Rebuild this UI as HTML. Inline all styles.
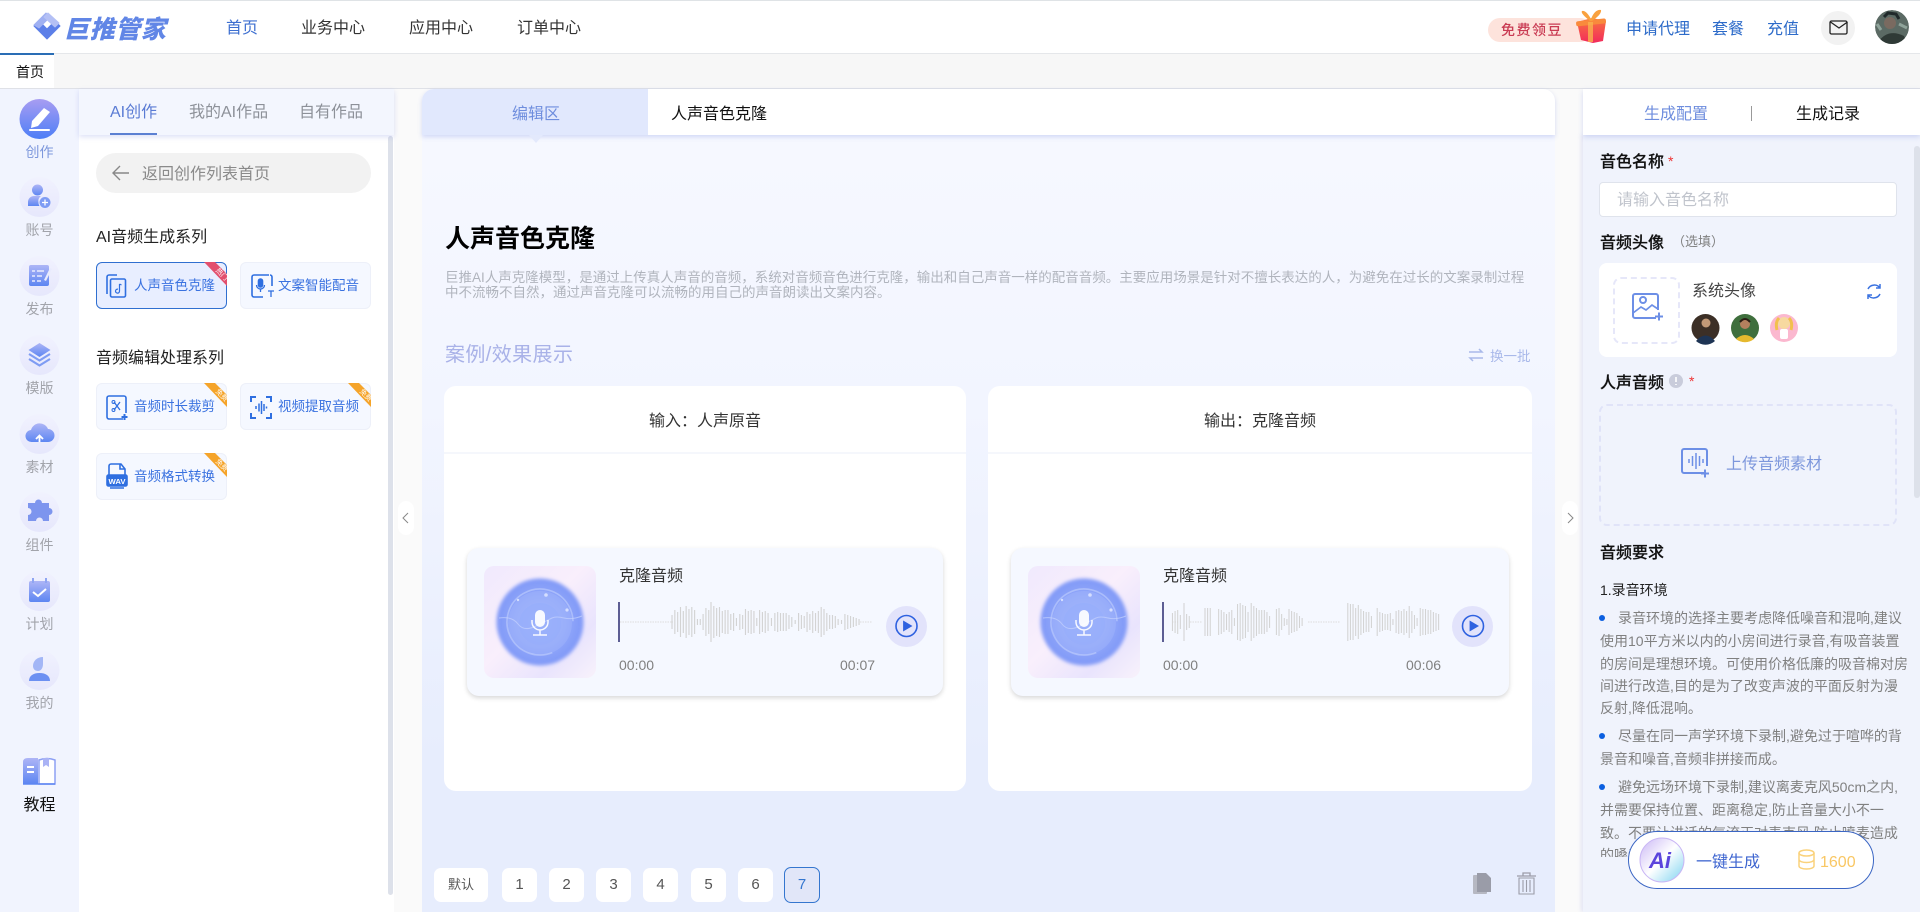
<!DOCTYPE html>
<html lang="zh"><head><meta charset="utf-8"><title>巨推管家</title>
<style>
*{box-sizing:border-box;margin:0;padding:0}
html,body{width:1920px;height:912px;overflow:hidden;background:#fafafa;font-family:"Liberation Sans","Noto Sans CJK SC",sans-serif}
.a{position:absolute}
.t{position:absolute;white-space:nowrap;line-height:20px;height:20px;font-size:16px;color:#333;margin-top:2px}
.m0{margin-top:0}
.c{transform:translateX(-50%)}
.card{position:absolute;width:131px;height:47px;background:#f5f8ff;border:1px solid #edf0f9;border-radius:6px}
.ct{position:absolute;left:37px;top:13px;font-size:13.5px;line-height:20px;color:#3a72e0;white-space:nowrap}
.pg{position:absolute;top:868px;height:34px;width:35px;background:#fff;border-radius:7px;text-align:center;line-height:33px;font-size:15px;color:#555}
.lbl{position:absolute;left:1600px;font-size:16px;line-height:20px;height:20px;font-weight:500;color:#111;white-space:nowrap;-webkit-text-stroke:.2px #111}
.req{position:absolute;left:1600px;width:298px;font-size:14px;line-height:20px;color:#808080;white-space:nowrap}
.dot{position:absolute;left:1599px;width:6px;height:6px;border-radius:50%;background:#0b5fe0}
.side{position:absolute;left:0;width:79px;text-align:center;font-size:14px;line-height:20px;color:#a2a4ab}
</style></head><body>

<!-- backgrounds -->
<div class="a" style="left:0;top:0;width:1920px;height:54px;background:#fff;border-top:1px solid #dfe3e6;border-bottom:1px solid #e5e7ea"></div>
<div class="a" style="left:0;top:54px;width:1920px;height:35px;background:#f7f7f7;border-bottom:1px solid #dfe1e7"></div>
<div class="a" style="left:0;top:55px;width:54px;height:33px;background:#fff"></div>
<div class="a" style="left:0;top:53px;width:54px;height:2px;background:#2a6db5"></div>

<div class="a" style="left:0;top:89px;width:79px;height:823px;background:#f1f4fe"></div>
<div class="a" style="left:79px;top:135px;width:315px;height:777px;background:#fff"></div>
<div class="a" style="left:388px;top:136px;width:5px;height:759px;background:#dde1ea;border-radius:3px"></div>
<div class="a" style="left:79px;top:89px;width:315px;height:46px;background:#f3f6fe;box-shadow:0 2px 5px rgba(100,120,220,.22)"></div>
<div class="a" style="left:110px;top:133px;width:47px;height:2px;background:#5b80d2"></div>

<div class="a" style="left:422px;top:135px;width:1133px;height:777px;background:linear-gradient(#f6f8ff,#f2f5ff 35%,#e7edfd 80%)"></div>
<div class="a" style="left:422px;top:89px;width:1133px;height:46px;background:#fff;border-radius:12px 12px 0 0;box-shadow:0 2px 5px rgba(100,120,220,.25)"></div>
<div class="a" style="left:422px;top:89px;width:226px;height:46px;background:#e1e8fd;border-radius:12px 0 0 0"></div>
<div class="a" style="left:529px;top:135px;width:0;height:0;border-left:7px solid transparent;border-right:7px solid transparent;border-top:8px solid #e3e9fc"></div>

<div class="a" style="left:444px;top:386px;width:522px;height:405px;background:#fff;border-radius:12px"></div>
<div class="a" style="left:988px;top:386px;width:544px;height:405px;background:#fff;border-radius:12px"></div>
<div class="a" style="left:444px;top:452px;width:522px;height:2px;background:#f5f7fc"></div>
<div class="a" style="left:988px;top:452px;width:544px;height:2px;background:#f5f7fc"></div>
<div class="a" style="left:467px;top:548px;width:476px;height:148px;background:#f5f8ff;border-radius:12px;box-shadow:0 2px 5px rgba(0,0,0,.16)"></div>
<div class="a" style="left:1011px;top:548px;width:498px;height:148px;background:#f5f8ff;border-radius:12px;box-shadow:0 2px 5px rgba(0,0,0,.16)"></div>
<div class="a" style="left:484px;top:566px;width:112px;height:112px;border-radius:10px;background:linear-gradient(135deg,#f0e9fd,#f9effc 45%,#e9e4fd 75%,#f8f2fb)"></div>
<div class="a" style="left:1028px;top:566px;width:112px;height:112px;border-radius:10px;background:linear-gradient(135deg,#f0e9fd,#f9effc 45%,#e9e4fd 75%,#f8f2fb)"></div>
<div class="a" style="left:886px;top:606px;width:41px;height:41px;border-radius:50%;background:#e2e3fb"></div>
<div class="a" style="left:1452px;top:606px;width:41px;height:41px;border-radius:50%;background:#e2e3fb"></div>

<div class="a" style="left:398px;top:501px;width:16px;height:34px;background:#fff;border-radius:8px"></div>
<div class="a" style="left:1562px;top:501px;width:16px;height:34px;background:#fff;border-radius:8px"></div>

<div class="a" style="left:1583px;top:135px;width:337px;height:777px;background:#f0f3fc;box-shadow:-2px 0 4px rgba(110,120,220,.16)"></div>
<div class="a" style="left:1583px;top:89px;width:337px;height:46px;background:#fff;box-shadow:0 2px 5px rgba(100,120,220,.25)"></div>
<div class="a" style="left:1914px;top:146px;width:6px;height:352px;background:#dde1ea;border-radius:3px"></div>
<div class="a" style="left:1751px;top:106px;width:1px;height:15px;background:#999"></div>

<div class="a" style="left:1599px;top:182px;width:298px;height:35px;background:#fff;border:1px solid #dfe3ec;border-radius:4px"></div>
<div class="a" style="left:1599px;top:263px;width:298px;height:94px;background:#fff;border-radius:8px"></div>
<div class="a" style="left:1613px;top:277px;width:67px;height:67px;border:2px dashed #e6e7f9;border-radius:8px"></div>
<div class="a" style="left:1599px;top:404px;width:298px;height:122px;border:2px dashed #e0e3f8;border-radius:8px"></div>

<div class="a" style="left:96px;top:153px;width:275px;height:40px;background:#f2f2f2;border-radius:20px"></div>
<div class="a" style="left:1488px;top:18px;width:104px;height:24px;background:#fde3dc;border-radius:12px"></div>
<div class="a" style="left:1821px;top:11px;width:34px;height:34px;background:#f2f2f2;border-radius:50%"></div>

<!-- cards -->
<div class="card" style="left:96px;top:262px;background:#e8eeff;border:1px solid #2f6fd0"><div class="ct">人声音色克隆</div></div>
<div class="card" style="left:240px;top:262px"><div class="ct">文案智能配音</div></div>
<div class="card" style="left:96px;top:383px"><div class="ct">音频时长裁剪</div></div>
<div class="card" style="left:240px;top:383px"><div class="ct">视频提取音频</div></div>
<div class="card" style="left:96px;top:453px"><div class="ct">音频格式转换</div></div>

<!-- all graphics -->
<svg class="a" style="left:0;top:0" width="1920" height="912" viewBox="0 0 1920 912" fill="none">
<defs>
<linearGradient id="g" x1="0" y1="0" x2="0" y2="1"><stop offset="0" stop-color="#aeb5f6"/><stop offset="1" stop-color="#5d86f2"/></linearGradient>
<linearGradient id="cb" x1="0" y1="0" x2="0" y2="1"><stop offset="0" stop-color="#f1f2fe"/><stop offset="1" stop-color="#e6e7fc"/></linearGradient>
<linearGradient id="act" x1="0" y1="0" x2="0" y2="1"><stop offset="0" stop-color="#a89df2"/><stop offset="1" stop-color="#4d7ef6"/></linearGradient>
<radialGradient id="disc"><stop offset="0" stop-color="#a4b7fb"/><stop offset=".6" stop-color="#93a9fa"/><stop offset="1" stop-color="#7f98f7"/></radialGradient>
<linearGradient id="ai" x1="0" y1="0" x2="1" y2="1"><stop offset="0" stop-color="#c9b6f5"/><stop offset=".5" stop-color="#fff"/><stop offset="1" stop-color="#7dd3f0"/></linearGradient>
<linearGradient id="gift" x1="0" y1="0" x2="0" y2="1"><stop offset="0" stop-color="#f9763e"/><stop offset="1" stop-color="#f22a5c"/></linearGradient>
<filter id="bl" x="-20%" y="-20%" width="140%" height="140%"><feGaussianBlur stdDeviation="1.800"/></filter>
<clipPath id="avc"><circle cx="1892" cy="27" r="17"/></clipPath>
<g id="disk">
<circle r="43.5" fill="url(#disc)" filter="url(#bl)"/>
<circle cy="1" r="32" fill="#a2b5fb" opacity=".45"/>
<circle cy="2" r="21" fill="#96adfb" opacity=".6"/>
<circle r="33" fill="none" stroke="#c7d3fd" stroke-width="1.600" opacity=".55" stroke-dasharray="120 40" transform="rotate(150)"/>
<path d="M-41 -4Q-28 -6 -22 2T-4 4T12 -4T24 -4T42 -6" stroke="#c4d1fd" stroke-width="1" fill="none" opacity=".7"/>
<circle cx="6" cy="-27" r="1.800" fill="#d5defe"/><circle cx="27" cy="-12" r="1.600" fill="#d5defe"/><circle cx="-22" cy="-22" r="1.200" fill="#d5defe"/>
<rect x="-5" y="-12" width="10" height="17" rx="5" fill="#fff" opacity=".92"/>
<path d="M-8 -2v2a8 8 0 0 0 16 0v-2M0 8v5M-7 13h14" stroke="#fff" stroke-width="1.500" opacity=".92"/>
</g>
<g id="play"><circle r="10.500" stroke="#2f62e0" stroke-width="1.600" fill="none"/><path d="M-3.400 -5.500L6 0L-3.400 5.500Z" fill="#2f62e0"/></g>
</defs>

<!-- logo -->
<g transform="translate(2,0)">
<path d="M32 26l13 13 13-13-5-5-8 8-8-8z" fill="#5c7fe8" stroke="#5c7fe8" stroke-width="1" stroke-linejoin="round"/>
<path d="M32 25l12-12 4 4-11 11z" fill="#9fb0f2" stroke="#9fb0f2" stroke-width="1" stroke-linejoin="round"/>
<path d="M46 13l11 10-4 4-11-10z" fill="#b4c0f5" stroke="#b4c0f5" stroke-width="1" stroke-linejoin="round"/>
</g>

<!-- sidebar circles -->
<circle cx="39.500" cy="119" r="20" fill="url(#act)"/>
<circle cx="39.500" cy="197" r="20" fill="url(#cb)"/>
<circle cx="39.500" cy="276" r="20" fill="url(#cb)"/>
<circle cx="39.500" cy="355" r="20" fill="url(#cb)"/>
<circle cx="39.500" cy="434" r="20" fill="url(#cb)"/>
<circle cx="39.500" cy="512" r="20" fill="url(#cb)"/>
<circle cx="39.500" cy="591" r="20" fill="url(#cb)"/>
<circle cx="39.500" cy="670" r="20" fill="url(#cb)"/>

<!-- sidebar glyphs -->
<path d="M44 108l6 4-12 14-7 2 1-7z" fill="#fff"/><path d="M30 130h19" stroke="#fff" stroke-width="2" stroke-linecap="round"/>
<circle cx="37.500" cy="190" r="5.500" fill="url(#g)"/><path d="M28 206v-4a6 6 0 0 1 6-6h7a6 6 0 0 0 0 10z" fill="url(#g)"/><circle cx="45" cy="202.500" r="6" fill="#7e9cf4" stroke="#e9ebfd" stroke-width="1"/><path d="M45 199.500v6M42 202.500h6" stroke="#fff" stroke-width="1.300"/>
<rect x="29" y="265" width="20" height="21" rx="2" fill="url(#g)"/><path d="M32 271h3M37 271h7M32 276h3M37 276h5M32 281h3M37 281h4" stroke="#e9ebfd" stroke-width="1.500"/><path d="M44 280l6-12 2 1-6 12z" fill="#e9ebfd"/>
<path d="M39.500 343l11 7-11 7-11-7z" fill="url(#g)"/><path d="M29 354l10.500 6.500L50 354M29 359l10.500 6.500L50 359" stroke="#7f9cf3" stroke-width="2.200" fill="none"/>
<path d="M32 442a6 6 0 0 1-1-12 9 9 0 0 1 17-1 6.500 6.500 0 0 1 0 13z" fill="url(#g)"/><path d="M39.500 442v-6M36 439l3.500-3.500 3.500 3.500" stroke="#fff" stroke-width="1.800"/>
<path d="M29 505h7a3.500 3.500 0 1 1 7 0h7v5a3.500 3.500 0 1 1 0 7v6h-6a3.500 3.500 0 1 0-7 0h-8v-6a3.500 3.500 0 1 0 0-7z" fill="#7d95ee" transform="translate(-1,-2)"/>
<rect x="29" y="581" width="21" height="21" rx="2" fill="url(#g)"/><path d="M33 578v5M46 578v5" stroke="#8fa5f2" stroke-width="2"/><path d="M33 592l5 4 8-7" stroke="#fff" stroke-width="2" fill="none"/>
<path d="M33 666c0-5 4-9 10-9l0 7c0 4-2 7-5 7s-5-2-5-5z" fill="#a3b6f6"/><path d="M29 681c0-5 4-8 10.500-8s10.500 3 10.500 8z" fill="#6c90f2"/>
<path d="M23 762q0-4 5-4h10v26H23z" fill="url(#g)"/><path d="M39 760q8-3 16 0v24H39z" fill="#fff" stroke="#8da0f4" stroke-width="1.500"/><path d="M43 758v9l3-2 3 2v-9" fill="#aab3f5"/><path d="M27 767h7M27 772h7" stroke="#fff" stroke-width="2"/><path d="M23 784h32" stroke="#5d86f2" stroke-width="1.500"/>

<!-- back arrow -->
<path d="M129 173H114M120 166l-7 7 7 7" stroke="#888" stroke-width="1.400" fill="none"/>

<!-- card icons -->
<g stroke="#2f6fe0" stroke-width="1.600" fill="none">
<path d="M117 275h-8a2 2 0 0 0-2 2v17"/><rect x="110.500" y="279" width="15" height="18" rx="1.500"/><path d="M119.500 284v7a2 2 0 1 1-1.500-1.800M119.500 284l2 1" stroke-width="1.200"/>
<path d="M269 275h-15a2 2 0 0 0-2 2v18a2 2 0 0 0 2 2h9M272 286V277a2 2 0 0 0-2-2"/><rect x="258.500" y="279" width="4" height="8" rx="2" fill="#2f6fe0"/><path d="M256.500 285a4 4 0 0 0 8 0M260.500 289v3M268 291h6M271 291v6" stroke-width="1.300"/>
<g transform="translate(0,22)"><path d="M123 397h-14a2 2 0 0 1-2-2v-19a2 2 0 0 1 2-2h15a2 2 0 0 1 2 2v15"/><path d="M114 380l6 8M120 380l-6 8" stroke-width="1.300"/><circle cx="113.500" cy="380" r="1.500" stroke-width="1"/><circle cx="113.500" cy="388" r="1.500" stroke-width="1"/><path d="M124.500 392v6M121.500 395h6" stroke-width="2"/></g>
<g transform="translate(0,21)"><path d="M251 381v-5h5M266 376h5v5M251 392v5h5M266 397h5v-5" stroke-width="2"/><path d="M256 385v3M259 382.500v8M261.500 380v13M264 383v7M266.500 385.500v2" stroke-width="1.500"/></g>
<path d="M109 475v-9a2 2 0 0 1 2-2h10l4 5v6M125 469h-5v-5"/>
<rect x="107" y="475" width="20" height="11" rx="1.500" fill="#2f6fe0"/><path d="M110 488h14" stroke-width="1.500"/>
</g>
<text x="108.500" y="484" font-size="7.500" font-weight="700" fill="#fff" font-family="Liberation Sans" textLength="17" lengthAdjust="spacingAndGlyphs">WAV</text>

<!-- ribbons -->
<g>
<polygon points="204,262 215,262 227,274 227,286" fill="#e2506e"/>
<text x="214" y="272" font-size="7" fill="#fff" transform="rotate(45 216 273)" font-family="Liberation Sans,Noto Sans CJK SC">热门</text>
<polygon points="204,383 215,383 227,395 227,407" fill="#f5a42a"/>
<text x="214" y="393" font-size="7" fill="#fff" transform="rotate(45 216 394)" font-family="Liberation Sans,Noto Sans CJK SC">免费</text>
<polygon points="348,383 359,383 371,395 371,407" fill="#f5a42a"/>
<text x="358" y="393" font-size="7" fill="#fff" transform="rotate(45 360 394)" font-family="Liberation Sans,Noto Sans CJK SC">免费</text>
<polygon points="204,453 215,453 227,465 227,477" fill="#f5a42a"/>
<text x="214" y="463" font-size="7" fill="#fff" transform="rotate(45 216 464)" font-family="Liberation Sans,Noto Sans CJK SC">免费</text>
</g>

<!-- collapse chevrons -->
<path d="M408 513l-5 5 5 5" stroke="#888" stroke-width="1" fill="none"/>
<path d="M1568 513l5 5-5 5" stroke="#888" stroke-width="1" fill="none"/>

<!-- swap icon -->
<path d="M1469 352h13l-3-3M1483 358h-13l3 3" stroke="#a9b9ea" stroke-width="1.500" fill="none"/>

<!-- disks -->
<use href="#disk" x="540" y="622"/>
<use href="#disk" x="1084" y="622"/>

<!-- waves -->
<path d="M619 602v40" stroke="#0b0b5a" stroke-width="1.300"/>
<path d="M1163 602v40" stroke="#0b0b5a" stroke-width="1.300"/>
<path d="M620 622h53M860 622h12M1172 622h6M1190 622h12M1308 622h32" stroke="#ddd" stroke-width="1" stroke-dasharray="1.500 1"/>
<g transform="translate(611,622) scale(1.130,1)" stroke="#d3d3d3" stroke-width="1">
<path d="M54-7v14M56.500-12v24M59-10v20M61.500-15v30M64-11v22M66.500-16v32M69-13v26M71.500-15v30M74-12v24M76.500-3v6M79-3v6M81.500-8v16M84-14v28M86.500-12v24M88.500-20v40M91-16v32M93.500-14v28M96-15v30M98.500-11v22M101-12v24M103.500-12v24M106-8v16M108.500-9v18M111-4v8M114-8v16M116.500-7v14M119-13v26M121.500-11v22M124-12v24M126.500-11v22M129-4v8M131.500-12v24M134-10v20M136.500-11v22M139-9v18M142-4v8M145-9v18M147.500-10v20M150-9v18M152.500-9v18M155-9v18M157.500-7v14M160-5v10M163-2v4M166-9v18M168.500-7v14M171-6v12M173.500-10v20M176-8v16M178.500-11v22M181-9v18M183.500-11v22M186-15v30M188.500-13v26M191-9v18M193.500-7v14M196-7v14M198.500-6v12M201-3v6M204-2v4M207-8v16M209.500-7v14M212-6v12M214.500-5v10M217-4v8M219.500-3v6"/>
</g>
<g transform="translate(1163,622) scale(1.050,1)" stroke="#d3d3d3" stroke-width="1">
<path d="M9-9v18M11.500-11v22M14-12v24M16.500-7v14M20-19v38M22.500-8v16M25-6v12M40-14v28M42.500-14v28M45-14v28M53-13v26M55.500-12v24M58-10v20M60.500-8v16M63-10v20M65.500-12v24M68-4v8M71-18v36M73.500-19v38M76-17v34M78.500-16v32M81-10v20M84-19v38M86.500-16v32M89-14v28M91.500-12v24M94-12v24M96.500-12v24M99-10v20M101.500-6v12M108-13v26M110.500-14v28M113-8v16M115.500-4v8M118-3v6M120-13v26M122.500-11v22M125-10v20M127.500-9v18M130-6v12M132.500-4v8M176-19v38M178.500-18v36M181-18v36M183.500-14v28M186-17v34M188.500-13v26M191-11v22M193.500-10v20M196-10v20M198.500-6v12M204-14v28M206.500-10v20M209-9v18M211.500-8v16M214-8v16M216.500-9v18M219-3v6M222-11v22M224.500-12v24M227-11v22M229.500-13v26M232-11v22M234.500-16v32M237-11v22M239.500-7v14M242-4v8M245-14v28M247.500-13v26M250-13v26M252.500-12v24M255-12v24M257.500-10v20M260-9v18M262.500-8v16"/>
</g>
<use href="#play" x="906.500" y="626"/>
<use href="#play" x="1473" y="626"/>

<!-- copy / trash -->
<rect x="1473" y="875" width="14" height="19" rx="1" fill="#b6b8c2"/>
<path d="M1477 873h9l5 5v14h-14z" fill="#9a9ca8"/>
<path d="M1517 876h19M1523 876v-3h7v3" stroke="#9b9da8" stroke-width="1.300" fill="none"/>
<path d="M1519 878h15v16h-15zM1523 880v12M1526.500 880v12M1530 880v12" stroke="#9b9da8" stroke-width="1.100" fill="none"/>

<!-- right panel icons -->
<g stroke="#6d8fe6" stroke-width="2" fill="none">
<path d="M1656 318h-21a2 2 0 0 1-2-2v-20a2 2 0 0 1 2-2h21a2 2 0 0 1 2 2v14"/>
<circle cx="1643" cy="300" r="3"/><path d="M1633 313l8-6 5 3 6-5 6 4" stroke-width="1.700"/><path d="M1655 316.500h8M1659 312.500v8"/>
<path d="M1705 473h-21a2 2 0 0 1-2-2v-20a2 2 0 0 1 2-2h21a2 2 0 0 1 2 2v15"/>
<path d="M1689 459v4M1692.500 456v10M1696 453v16M1699.500 456v10M1703 459v4" stroke-width="1.500"/><path d="M1701 473.500h8M1705 469.500v8"/>
</g>
<path d="M1868 289a7 7 0 0 1 12-1M1880 294a7 7 0 0 1-12 1M1880 284v4h-4M1868 299v-4h4" stroke="#3a72e0" stroke-width="1.500" fill="none"/>
<circle cx="1676" cy="381" r="7" fill="#c9ccdb"/><path d="M1676 377v5M1676 384v1" stroke="#fff" stroke-width="1.600"/>

<!-- avatars -->
<circle cx="1705.500" cy="328" r="14" fill="#3c2f26"/><path d="M1696 341q9.500-11 19 0a14 14 0 0 1-19 0z" fill="#1e3454"/><circle cx="1706" cy="323" r="4.500" fill="#c39a78"/>
<circle cx="1745" cy="328" r="14" fill="#3f6f3d"/><path d="M1736 339q9-8 18 0a14 14 0 0 1-18 0z" fill="#e6b92e"/><circle cx="1745" cy="324" r="5" fill="#b4805e"/><path d="M1740 322q5-6 10 0" stroke="#2b1d14" stroke-width="2" fill="none"/>
<circle cx="1784" cy="328" r="14" fill="#fbb8cf"/><circle cx="1784" cy="323" r="6" fill="#f7d9a0"/><path d="M1777 330q-2-8 2-12M1791 330q2-8-2-12" stroke="#f2c04d" stroke-width="3" fill="none"/><rect x="1780" y="329" width="8" height="10" rx="2" fill="#fff"/>

<!-- header right icons -->
<path d="M1577 22l15-4 14 3-3 20-10 2-12-3z" fill="url(#gift)"/>
<rect x="1576" y="20" width="30" height="5" rx="2" fill="#f98a3c" transform="rotate(-6 1590 22)"/>
<path d="M1590 21q-10-8-8-10 4-1 9 8 4-10 10-9 1 4-9 11" fill="#f9a13e"/>
<rect x="1588" y="22" width="5" height="20" fill="#f9b14d" opacity=".8"/>
<rect x="1830" y="21" width="17" height="13" rx="1.500" stroke="#222" stroke-width="1.300" fill="none"/>
<path d="M1830.500 22l8.500 6 8.500-6" stroke="#222" stroke-width="1.300" fill="none"/>
<g clip-path="url(#avc)"><circle cx="1892" cy="27" r="17" fill="#5b6a64"/><circle cx="1890" cy="23" r="6" fill="#7a6a60"/><path d="M1878 42q10-14 26-6l4 10h-32z" fill="#2f3a36"/><path d="M1884 17l4-4 8 1 3 5" stroke="#20292a" stroke-width="3" fill="none"/><path d="M1899 24l8 4M1877 24l4 6" stroke="#8fa39a" stroke-width="3"/></g>
</svg>

<!-- header text -->
<div class="t" style="left:64px;top:13px;font-size:25px;line-height:30px;height:30px;font-style:italic;font-weight:900;color:#6186e6;letter-spacing:.6px">巨推管家</div>
<div class="t" style="left:226px;top:17px;color:#3d6fd0">首页</div>
<div class="t" style="left:301px;top:17px">业务中心</div>
<div class="t" style="left:409px;top:17px">应用中心</div>
<div class="t" style="left:517px;top:17px">订单中心</div>
<div class="t" style="left:16px;top:62px;font-size:14px;color:#111;margin-top:0">首页</div>
<div class="t m0" style="left:1501px;top:20px;font-size:14px;color:#c93b53;letter-spacing:1.500px;font-weight:500">免费领豆</div>
<div class="t" style="left:1626px;top:18px;color:#2d6bc9">申请代理</div>
<div class="t" style="left:1712px;top:18px;color:#2d6bc9">套餐</div>
<div class="t" style="left:1767px;top:18px;color:#2d6bc9">充值</div>

<!-- sidebar labels -->
<div class="side" style="top:142px;color:#7d97dc">创作</div>
<div class="side" style="top:220px">账号</div>
<div class="side" style="top:299px">发布</div>
<div class="side" style="top:378px">模版</div>
<div class="side" style="top:457px">素材</div>
<div class="side" style="top:535px">组件</div>
<div class="side" style="top:614px">计划</div>
<div class="side" style="top:693px">我的</div>
<div class="side" style="top:796px;font-size:16px;color:#111">教程</div>

<!-- left panel text -->
<div class="t" style="left:110px;top:101px;color:#5a7bd4">AI创作</div>
<div class="t" style="left:189px;top:101px;color:#8d9199">我的AI作品</div>
<div class="t" style="left:299px;top:101px;color:#8d9199">自有作品</div>
<div class="t" style="left:142px;top:163px;color:#8a8a8a">返回创作列表首页</div>
<div class="t" style="left:96px;top:226px;color:#222">AI音频生成系列</div>
<div class="t" style="left:96px;top:347px;color:#222">音频编辑处理系列</div>

<!-- center text -->
<div class="t" style="left:512px;top:103px;color:#6f8ede">编辑区</div>
<div class="t" style="left:671px;top:103px;color:#111">人声音色克隆</div>
<div class="t" style="left:445px;top:222px;font-size:25px;line-height:30px;height:30px;font-weight:700;color:#000">人声音色克隆</div>
<div class="a" style="left:445px;top:270px;width:1090px;font-size:13.500px;line-height:15px;color:#b0b4bd;white-space:nowrap">巨推AI人声克隆模型，是通过上传真人声音的音频，系统对音频音色进行克隆，输出和自己声音一样的配音音频。主要应用场景是针对不擅长表达的人，为避免在过长的文案录制过程<br>中不流畅不自然，通过声音克隆可以流畅的用自己的声音朗读出文案内容。</div>
<div class="t" style="left:445px;top:341px;font-size:20px;line-height:24px;height:24px;color:#a9b2e8;letter-spacing:.4px">案例/效果展示</div>
<div class="t" style="left:1490px;top:345px;font-size:13.500px;color:#a9b9ea">换一批</div>
<div class="t c" style="left:705px;top:410px;color:#333">输入：人声原音</div>
<div class="t c" style="left:1260px;top:410px;color:#333">输出：克隆音频</div>
<div class="t" style="left:619px;top:565px">克隆音频</div>
<div class="t" style="left:1163px;top:565px">克隆音频</div>
<div class="t m0" style="left:619px;top:655px;font-size:14px;color:#808080">00:00</div>
<div class="t m0" style="left:840px;top:655px;font-size:14px;color:#808080">00:07</div>
<div class="t m0" style="left:1163px;top:655px;font-size:14px;color:#808080">00:00</div>
<div class="t m0" style="left:1406px;top:655px;font-size:14px;color:#808080">00:06</div>

<!-- pagination -->
<div class="pg" style="left:434px;width:54px;font-size:13px">默认</div>
<div class="pg" style="left:502px">1</div>
<div class="pg" style="left:549px">2</div>
<div class="pg" style="left:596px">3</div>
<div class="pg" style="left:643px">4</div>
<div class="pg" style="left:691px">5</div>
<div class="pg" style="left:738px">6</div>
<div class="pg" style="left:784px;width:36px;top:867px;height:36px;background:#e1e6f8;border:1px solid #3476cf;color:#3476cf">7</div>

<!-- right text -->
<div class="t" style="left:1644px;top:103px;color:#6f8ede">生成配置</div>
<div class="t" style="left:1796px;top:103px;color:#111">生成记录</div>
<div class="lbl" style="top:153px">音色名称</div>
<div class="t m0" style="left:1668px;top:151px;color:#e33;font-size:14px">*</div>
<div class="t" style="left:1617px;top:189px;color:#c0c4cc">请输入音色名称</div>
<div class="lbl" style="top:234px">音频头像</div>
<div class="t" style="left:1672px;top:230px;font-size:13px;color:#808080">（选填）</div>
<div class="t" style="left:1692px;top:280px;color:#444">系统头像</div>
<div class="lbl" style="top:374px">人声音频</div>
<div class="t m0" style="left:1689px;top:371px;color:#e33;font-size:14px">*</div>
<div class="t" style="left:1726px;top:453px;color:#7d97dc">上传音频素材</div>
<div class="lbl" style="top:544px">音频要求</div>

<div class="a" style="left:1590px;top:570px;width:324px;height:287px;overflow:hidden">
<div class="t m0" style="left:10px;top:10px;font-size:14px;color:#222">1.录音环境</div>
<div class="dot" style="left:9px;top:45px"></div>
<div class="req" style="left:28px;top:38px">录音环境的选择主要考虑降低噪音和混响,建议</div>
<div class="req" style="left:10px;top:61px">使用10平方米以内的小房间进行录音,有吸音装置</div>
<div class="req" style="left:10px;top:84px">的房间是理想环境。可使用价格低廉的吸音棉对房</div>
<div class="req" style="left:10px;top:106px">间进行改造,目的是为了改变声波的平面反射为漫</div>
<div class="req" style="left:10px;top:128px">反射,降低混响。</div>
<div class="dot" style="left:9px;top:163px"></div>
<div class="req" style="left:28px;top:156px">尽量在同一声学环境下录制,避免过于喧哗的背</div>
<div class="req" style="left:10px;top:179px">景音和噪音,音频非拼接而成。</div>
<div class="dot" style="left:9px;top:214px"></div>
<div class="req" style="left:28px;top:207px">避免远场环境下录制,建议离麦克风50cm之内,</div>
<div class="req" style="left:10px;top:230px">并需要保持位置、距离稳定,防止音量大小不一</div>
<div class="req" style="left:10px;top:253px">致。不要让讲话的气流正对麦克风,防止喷麦造成</div>
<div class="req" style="left:10px;top:275px">的嗓音和爆破音。</div>
</div>

<!-- generate button -->
<div class="a" style="left:1628px;top:831px;width:246px;height:58px;background:#fff;border:1.500px solid #3b66c4;border-radius:29px"></div>
<svg class="a" style="left:1628px;top:831px" width="246" height="58" viewBox="0 0 246 58" fill="none">
<circle cx="34" cy="29" r="22" fill="url(#ai)"/>
<circle cx="34" cy="29" r="22" stroke="#c9b6f5" stroke-width="1"/>
<ellipse cx="178.500" cy="22" rx="7.500" ry="3" stroke="#fad27c" stroke-width="1.500"/>
<path d="M171 22v13c0 1.700 3.400 3 7.500 3s7.500-1.300 7.500-3V22M171 28.500c0 1.700 3.400 3 7.500 3s7.500-1.300 7.500-3" stroke="#fad27c" stroke-width="1.500"/>
<text x="21" y="37" font-size="22" font-weight="700" font-style="italic" fill="#5b45dc" font-family="Liberation Sans">Ai</text>
</svg>
<div class="t" style="left:1696px;top:851px;color:#3f66d0">一键生成</div>
<div class="t" style="left:1820px;top:851px;color:#f9c764">1600</div>

</body></html>
